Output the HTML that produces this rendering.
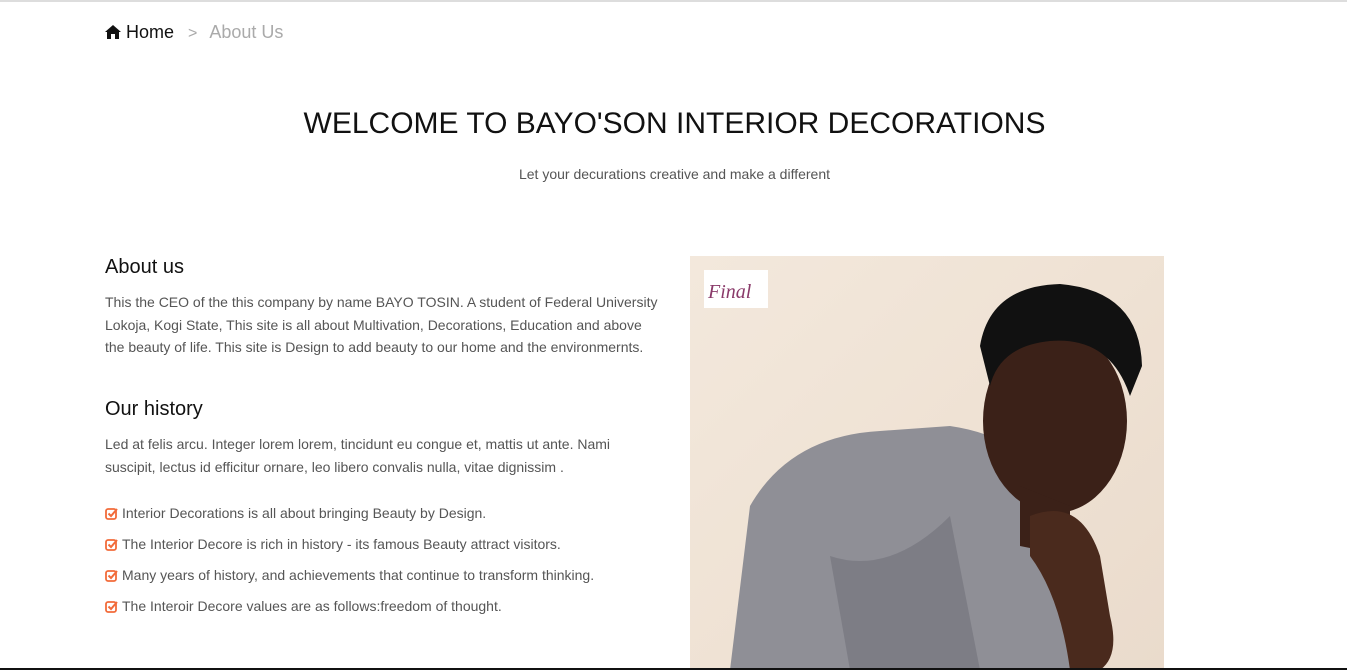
<!DOCTYPE html>
<html><head><meta charset="utf-8"><style>
*{margin:0;padding:0;box-sizing:border-box}
body{width:1347px;height:670px;overflow:hidden;background:#fff;font-family:"Liberation Sans",Arial,sans-serif;position:relative}
.top{position:absolute;left:0;top:0;width:1347px;height:2px;background:#ddd}
.bc{position:absolute;left:105px;top:22px;font-size:18px;color:#111}
.bc .sep{color:#aaa;margin:0 12px 0 14px;font-size:16px}
.bc .cur{color:#aaa}
h1{position:absolute;left:0;width:1349px;top:107px;text-align:center;font-weight:400;font-size:30px;color:#111}
.sub{position:absolute;left:0;width:1349px;top:166px;text-align:center;font-size:14px;color:#555}
h3{position:absolute;left:105px;font-weight:400;font-size:20px;color:#111}
p{position:absolute;left:105px;width:555px;font-size:14px;line-height:22.5px;color:#555}
ul{position:absolute;left:105px;top:505px;list-style:none;font-size:14px;color:#555}
li{height:31px;display:flex;align-items:flex-start}
li svg{margin-right:4px;margin-top:2px}
.photo{position:absolute;left:690px;top:256px;width:474px;height:414px;background:linear-gradient(135deg,#f3e8dc,#efe2d4 50%,#eadbcc);overflow:hidden}
.bot{position:absolute;left:0;top:668px;width:1347px;height:2px;background:#111}
</style></head><body>
<div class="top"></div>
<div class="bc"><svg width="16" height="14" viewBox="0 0 16 14" style="vertical-align:-1px"><path d="M8 0L0 7h2v7h4V9h4v5h4V7h2z" fill="#111"/></svg> Home<span class="sep">&gt;</span><span class="cur">About Us</span></div>
<h1>WELCOME TO BAYO'SON INTERIOR DECORATIONS</h1>
<div class="sub">Let your decurations creative and make a different</div>
<h3 style="top:256px">About us</h3>
<p style="top:291px">This the CEO of the this company by name BAYO TOSIN. A student of Federal University Lokoja, Kogi State, This site is all about Multivation, Decorations, Education and above the beauty of life. This site is Design to add beauty to our home and the environmernts.</p>
<h3 style="top:398px">Our history</h3>
<p style="top:433px">Led at felis arcu. Integer lorem lorem, tincidunt eu congue et, mattis ut ante. Nami suscipit, lectus id efficitur ornare, leo libero convalis nulla, vitae dignissim .</p>
<ul>
<li><svg width="13" height="13" viewBox="0 0 13 13"><rect x="1" y="2" width="10" height="10" rx="2" fill="none" stroke="#f26b3a" stroke-width="1.8"/><path d="M3.5 6.5l2.5 2.5 6-7" fill="none" stroke="#f26b3a" stroke-width="2"/></svg>Interior Decorations is all about bringing Beauty by Design.</li>
<li><svg width="13" height="13" viewBox="0 0 13 13"><rect x="1" y="2" width="10" height="10" rx="2" fill="none" stroke="#f26b3a" stroke-width="1.8"/><path d="M3.5 6.5l2.5 2.5 6-7" fill="none" stroke="#f26b3a" stroke-width="2"/></svg>The Interior Decore is rich in history - its famous Beauty attract visitors.</li>
<li><svg width="13" height="13" viewBox="0 0 13 13"><rect x="1" y="2" width="10" height="10" rx="2" fill="none" stroke="#f26b3a" stroke-width="1.8"/><path d="M3.5 6.5l2.5 2.5 6-7" fill="none" stroke="#f26b3a" stroke-width="2"/></svg>Many years of history, and achievements that continue to transform thinking.</li>
<li><svg width="13" height="13" viewBox="0 0 13 13"><rect x="1" y="2" width="10" height="10" rx="2" fill="none" stroke="#f26b3a" stroke-width="1.8"/><path d="M3.5 6.5l2.5 2.5 6-7" fill="none" stroke="#f26b3a" stroke-width="2"/></svg>The Interoir Decore values are as follows:freedom of thought.</li>
</ul>
<div class="photo"><svg width="474" height="414" viewBox="0 0 474 414">
<rect x="14" y="14" width="64" height="38" fill="#fff"/>
<text x="18" y="42" font-family="Liberation Serif,serif" font-style="italic" font-size="20" fill="#8a3a6a">Final</text>
<path d="M40 414 L60 250 Q100 180 190 175 L260 170 Q330 180 360 230 L400 414Z" fill="#8f8f96"/>
<path d="M140 300 Q200 320 260 260 L290 414 L160 414Z" fill="#7d7d85"/>
<ellipse cx="365" cy="165" rx="72" ry="92" fill="#3b2118"/>
<path d="M290 90 Q300 30 370 28 Q450 35 452 110 L440 140 Q420 80 360 85 Q310 90 300 130Z" fill="#111"/>
<path d="M330 230 L380 250 L380 300 L330 290Z" fill="#3b2118"/>
<path d="M340 260 Q390 240 410 300 L420 360 Q430 400 410 414 L380 414 Q370 340 340 300Z" fill="#4a2a1d"/>
</svg></div>
<div class="bot"></div>
</body></html>
